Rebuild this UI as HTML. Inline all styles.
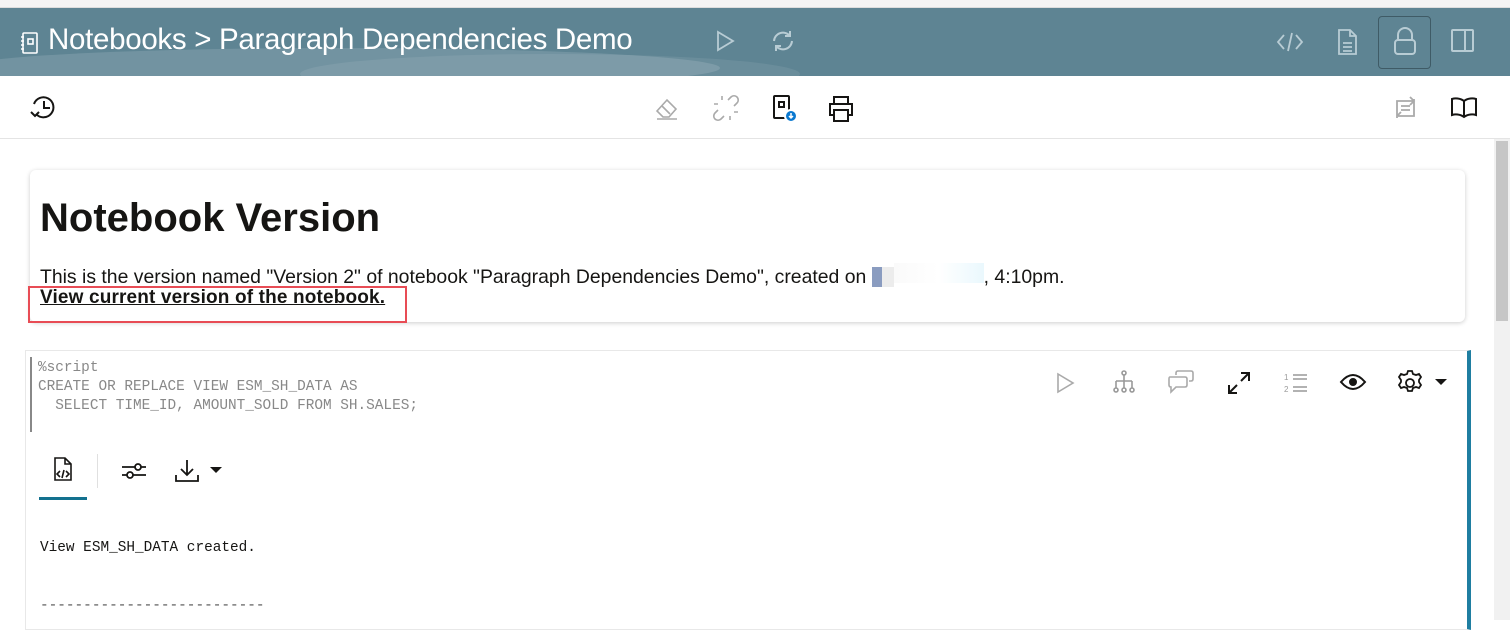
<!DOCTYPE html>
<html><head><meta charset="utf-8"><style>
*{margin:0;padding:0;box-sizing:border-box}
body{width:1510px;height:620px;overflow:hidden;background:#fff;font-family:"Liberation Sans",sans-serif;position:relative}
.top{position:absolute;left:0;top:0;width:1510px;height:8px;background:#f4f4f4;border-bottom:1px solid #ddd}
.hdr{position:absolute;left:0;top:8px;width:1510px;height:68px;background:#5e8493;overflow:hidden}
.hdr .sw{position:absolute;left:-40px;top:40px;width:760px;height:40px;border-radius:50%;background:rgba(255,255,255,.13)}
.hdr .t{position:absolute;left:20px;top:15px;color:#fff;font-size:29.5px;letter-spacing:-0.3px;white-space:nowrap}
.tb{position:absolute;left:0;top:76px;width:1510px;height:63px;border-bottom:1px solid #e4e4e4;background:#fff}
.ic{position:absolute}
.sb{position:absolute;left:1494px;top:139px;width:16px;height:481px;background:#f1f1f1}
.sb div{position:absolute;left:2px;top:2px;width:12px;height:180px;background:#c6c6c6}
.card{position:absolute;left:30px;top:170px;width:1435px;height:152px;background:#fff;border-radius:6px;box-shadow:0 1px 5px rgba(0,0,0,.2)}
.card h1{position:absolute;left:10px;top:26px;font-size:40px;font-weight:bold;color:#161513}
.card p{position:absolute;left:10px;top:93px;font-size:19.4px;color:#161513;white-space:nowrap}
.card a{position:absolute;left:10px;top:117px;font-size:19px;font-weight:bold;color:#161513;text-decoration:underline;letter-spacing:0.15px}
.red{position:absolute;left:28px;top:286px;width:379px;height:37px;border:2px solid #e84c55}
.para{position:absolute;left:25px;top:350px;width:1446px;height:280px;border:1px solid #e8e8e8;border-right:4px solid #1f7ea1}
.code{position:absolute;left:30px;top:357px;width:2px;height:75px;background:#888}
.mono{font-family:"Liberation Mono",monospace;position:absolute;white-space:pre;font-size:14.4px}
</style></head><body>
<div class="top"></div>
<div class="hdr"><div class="sw"></div><div class="sw" style="left:300px;top:46px;width:500px;opacity:.6"></div>
<svg class="ic" style="left:20px;top:23px" width="20" height="24" viewBox="0 0 20 24" fill="none" stroke="#fff" stroke-width="1.6"><rect x="3" y="2" width="14" height="20" rx="1"/><rect x="8" y="8" width="5" height="5"/><path d="M1 6h3M1 10h3M1 14h3M1 18h3"/></svg>
<div class="t" style="left:48px">Notebooks &gt; Paragraph Dependencies Demo</div>
<svg class="ic" style="left:714px;top:22px" width="22" height="22" fill="none" stroke="#b8ccd4" stroke-width="1.8"><path d="M4 2l15 9-15 9z"/></svg>
<svg class="ic" style="left:770px;top:20px" width="26" height="26" fill="none" stroke="#b8ccd4" stroke-width="2"><path d="M4 13a9 9 0 0 1 16-5M22 13a9 9 0 0 1-16 5M20 3v5h-5M6 23v-5h5"/></svg>
<svg class="ic" style="left:1276px;top:22px" width="28" height="24" fill="none" stroke="#b8ccd4" stroke-width="1.8"><path d="M8 5l-6 7 6 7M20 5l6 7-6 7M16 3l-4 18"/></svg>
<svg class="ic" style="left:1337px;top:20px" width="22" height="28" fill="none" stroke="#b8ccd4" stroke-width="1.8"><path d="M2 2h11l6 6v18H2zM13 2v6h6M6 15h9M6 19h9M6 23h9"/></svg>
<div class="ic" style="left:1378px;top:8px;width:53px;height:53px;border:1.5px solid #3f5b66;border-radius:4px"></div>
<svg class="ic" style="left:1392px;top:18px" width="26" height="30" fill="none" stroke="#b8ccd4" stroke-width="2"><path d="M6 14V9a7 7 0 0 1 14 0v5"/><rect x="3" y="14" width="20" height="14" rx="3"/></svg>
<svg class="ic" style="left:1450px;top:20px" width="26" height="26" fill="none" stroke="#b8ccd4" stroke-width="2"><rect x="2" y="2" width="21" height="21" rx="1"/><path d="M15 2v21"/></svg>
</div>
<div class="tb">
<svg class="ic" style="left:30px;top:18px" width="28" height="28" fill="none" stroke="#161513" stroke-width="2"><path d="M6 20A10 10 0 1 0 4 10M14 7v7h6M1 18l4 4 4-4"/></svg>
<svg class="ic" style="left:654px;top:20px" width="26" height="26" fill="none" stroke="#aaa" stroke-width="1.6"><path d="M3 15l10-11 9 9-7 8H9zM8 10l8 8M3 23h20"/></svg>
<svg class="ic" style="left:712px;top:18px" width="28" height="28" fill="none" stroke="#aaa" stroke-width="1.6"><path d="M16 6l3-3a4 4 0 0 1 6 6l-3 3M12 22l-3 3a4 4 0 0 1-6-6l3-3M10 2v4M2 10h4M18 26v-4M26 18h-4"/></svg>
<svg class="ic" style="left:770px;top:18px" width="30" height="30" fill="none" stroke="#161513" stroke-width="2"><rect x="4" y="2" width="15" height="22" rx="1"/><rect x="9" y="8" width="5" height="5"/><circle cx="21" cy="22" r="6" fill="#0b79d0" stroke="#fff"/><path d="M21 19v5M19 22l2 2 2-2" stroke="#fff" stroke-width="1.5"/></svg>
<svg class="ic" style="left:827px;top:19px" width="28" height="28" fill="none" stroke="#161513" stroke-width="2"><path d="M7 9V2h14v7M7 20H3V9h22v11h-4"/><rect x="7" y="15" width="14" height="11"/></svg>
<svg class="ic" style="left:1392px;top:18px" width="28" height="28" fill="none" stroke="#aaa" stroke-width="1.8"><path d="M5 24V7h17M18 3l4 4-4 4M22 5v17H6M9 18l-4 4M9 12h9M9 16h9"/></svg>
<svg class="ic" style="left:1450px;top:20px" width="28" height="24" fill="none" stroke="#161513" stroke-width="2"><path d="M14 5C10 2 5 2 2 3v16c3-1 8-1 12 2 4-3 9-3 12-2V3c-3-1-8-1-12 2zM14 5v16"/></svg>
</div>
<div class="sb"><div></div></div>
<div class="card">
<h1>Notebook Version</h1>
<p>This is the version named "Version 2" of notebook "Paragraph Dependencies Demo", created on <span style="display:inline-block;width:10px;height:20px;background:#8a9cc0;vertical-align:-4px"></span><span style="display:inline-block;width:12px;height:20px;background:#ececec;vertical-align:-4px"></span><span style="display:inline-block;width:90px;height:20px;background:linear-gradient(90deg,#fafafa,#fff 50%,#eaf8fd)"></span>, 4:10pm.</p>
<a>View current version of the notebook.</a>
</div>
<div class="red"></div>
<div class="para"></div>
<div class="code"></div>
<div class="mono" style="left:38px;top:359px;color:#888;line-height:19px">%script
CREATE OR REPLACE VIEW ESM_SH_DATA AS
  SELECT TIME_ID, AMOUNT_SOLD FROM SH.SALES;</div>
<svg class="ic" style="left:1055px;top:372px" width="22" height="22" fill="none" stroke="#aaa" stroke-width="1.6"><path d="M3 2l15 9-15 9z"/></svg>
<svg class="ic" style="left:1112px;top:370px" width="24" height="24" fill="none" stroke="#999" stroke-width="1.6"><circle cx="12" cy="3" r="2"/><path d="M12 5v6M4 11h16M4 11v7M12 11v7M20 11v7"/><circle cx="4" cy="20" r="2"/><circle cx="12" cy="20" r="2"/><circle cx="20" cy="20" r="2"/></svg>
<svg class="ic" style="left:1167px;top:369px" width="28" height="26" fill="none" stroke="#aaa" stroke-width="1.6"><path d="M9 6V4q0-2 2-2h13q2 0 2 2v6q0 2-2 2h-2M3 8h15q2 0 2 2v6q0 2-2 2H9l-5 5v-5q-2 0-2-2v-6q0-2 1-2z"/></svg>
<svg class="ic" style="left:1226px;top:370px" width="26" height="26" fill="none" stroke="#161513" stroke-width="2"><path d="M3 23l8-8M3 15v8h8M23 3l-8 8M15 3h8v8"/></svg>
<svg class="ic" style="left:1283px;top:371px" width="26" height="24" fill="none" stroke="#999" stroke-width="1.6"><path d="M10 4h14M10 8h14M10 16h14M10 20h14"/><text x="1" y="9" font-size="8" fill="#999" stroke="none" font-family="Liberation Sans">1</text><text x="1" y="21" font-size="8" fill="#999" stroke="none" font-family="Liberation Sans">2</text></svg>
<svg class="ic" style="left:1339px;top:372px" width="28" height="20" fill="none" stroke="#161513" stroke-width="2"><path d="M2 10q12-14 24 0-12 14-24 0z"/><circle cx="14" cy="10" r="3" fill="#161513"/></svg>
<svg class="ic" style="left:1396px;top:369px" width="28" height="28" fill="none" stroke="#161513" stroke-width="1.8"><path d="M12 2h4l1 3 3 1 3-1 2 3-2 3v2l2 3-2 3-3-1-3 1-1 3h-4l-1-3-3-1-3 1-2-3 2-3v-2l-2-3 2-3 3 1 3-1z"/><circle cx="14" cy="14" r="4"/></svg>
<svg class="ic" style="left:1434px;top:378px" width="14" height="8"><path d="M1 1h12L7 7z" fill="#161513"/></svg>
<svg class="ic" style="left:52px;top:456px" width="26" height="30" fill="none" stroke="#161513" stroke-width="1.6"><path d="M3 2h10l6 6v16H3zM13 2v6h6M8 15l-3 3 3 3M14 15l3 3-3 3M12 14l-2 8"/></svg>
<div class="ic" style="left:39px;top:497px;width:48px;height:3px;background:#13718f"></div>
<div class="ic" style="left:97px;top:454px;width:1px;height:34px;background:#e0e0e0"></div>
<svg class="ic" style="left:120px;top:459px" width="28" height="24" fill="none" stroke="#161513" stroke-width="1.8"><path d="M2 8h24M2 16h24"/><circle cx="18" cy="8" r="3" fill="#fff"/><circle cx="10" cy="16" r="3" fill="#fff"/></svg>
<svg class="ic" style="left:173px;top:457px" width="28" height="28" fill="none" stroke="#161513" stroke-width="1.8"><path d="M14 3v15M8 12l6 6 6-6M3 18v6h22v-6"/></svg>
<svg class="ic" style="left:209px;top:466px" width="14" height="8"><path d="M1 1h12L7 7z" fill="#161513"/></svg>
<div class="mono" style="left:40px;top:540px;color:#161513">View ESM_SH_DATA created.</div>
<div class="mono" style="left:40px;top:598px;color:#555">--------------------------</div>
</body></html>
